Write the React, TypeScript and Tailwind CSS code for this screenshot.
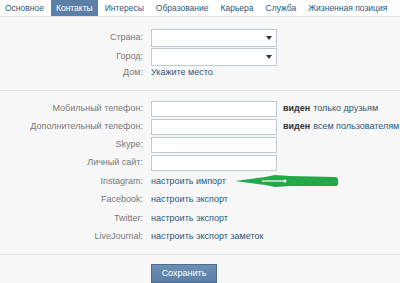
import React from "react";

const tabs = ["Основное", "Контакты", "Интересы", "Образование", "Карьера", "Служба", "Жизненная позиция"];

function Row({ label, children, h = "h-[18px]" }: { label: string; children: React.ReactNode; h?: string }) {
  return (
    <div className={`flex items-center whitespace-nowrap ${h}`}>
      <div className="w-[143px] shrink-0 text-right text-[#777]">{label}</div>
      <div className="ml-[8px] flex items-center">{children}</div>
    </div>
  );
}

function Select() {
  return (
    <div className="w-[126px] h-[18px] bg-white border border-[#c0cad5] flex items-center justify-end pr-[4px]">
      <div className="w-0 h-0 border-l-[3px] border-r-[3px] border-t-[4px] border-l-transparent border-r-transparent border-t-[#333]" />
    </div>
  );
}

function Input() {
  return <div className="w-[126px] h-[16px] bg-white border border-[#c0cad5]" />;
}

export default function App() {
  return (
    <div className="w-[400px] h-[283px] bg-[#f7f7f7] text-[9px] overflow-hidden" style={{ fontFamily: "'Liberation Sans', Arial, sans-serif" }}>
      <div className="h-[17px] bg-white flex items-stretch gap-[2px] border-b border-[#e4e4e4] text-[#2b587a] text-[8.5px] whitespace-nowrap">
        {tabs.map((t) => (
          <div
            key={t}
            className={`px-[5px] flex items-center ${t === "Контакты" ? "bg-[#5b7fa6] text-white" : ""}`}
          >
            {t}
          </div>
        ))}
      </div>

      <div className="pt-[12px] flex flex-col gap-[1px]">
        <Row label="Страна:"><Select /></Row>
        <Row label="Город:"><Select /></Row>
        <Row label="Дом:" h="h-[12px]"><span className="text-[#2b587a]">Укажите место</span></Row>
      </div>

      <div className="mt-[11px] border-t border-[#e4e4e4]" />

      <div className="pt-[10px] flex flex-col gap-[2px]">
        <Row label="Мобильный телефон:" h="h-[16px]">
          <Input />
          <span className="ml-[6px] font-bold text-[#333]">виден</span>
          <span className="ml-[3px] text-[#2b587a]">только друзьям</span>
        </Row>
        <Row label="Дополнительный телефон:" h="h-[16px]">
          <Input />
          <span className="ml-[6px] font-bold text-[#333]">виден</span>
          <span className="ml-[3px] text-[#2b587a]">всем пользователям</span>
        </Row>
        <Row label="Skype:" h="h-[16px]"><Input /></Row>
        <Row label="Личный сайт:" h="h-[16px]"><Input /></Row>
      </div>

      <div className="pt-[1px] flex flex-col">
        <Row label="Instagram:" h="h-[18.5px]">
          <span className="text-[#2b587a]">настроить импорт</span>
          <svg className="ml-[9px]" width="104" height="14" viewBox="0 0 104 14">
            <path d="M0 7 L30 3 L40 1 L55 2 L100 3 Q103 3 103 6 L103 10 Q103 12 100 12 L55 12 L40 13 L30 11 Z" fill="#23a84a" />
            <line x1="27" y1="7" x2="50" y2="7" stroke="#fff" strokeWidth="1.2" />
            <circle cx="50" cy="7" r="1.5" fill="#fff" />
          </svg>
        </Row>
        <Row label="Facebook:" h="h-[18.5px]"><span className="text-[#2b587a]">настроить экспорт</span></Row>
        <Row label="Twitter:" h="h-[18.5px]"><span className="text-[#2b587a]">настроить экспорт</span></Row>
        <Row label="LiveJournal:" h="h-[18.5px]"><span className="text-[#2b587a]">настроить экспорт заметок</span></Row>
      </div>

      <div className="mt-[8px] border-t border-[#e4e4e4]" />

      <div className="pl-[151px] pt-[9px]">
        <button className="w-[66px] h-[19px] bg-gradient-to-b from-[#6d8fb3] to-[#5b7fa6] border border-[#4a6d95] text-white text-[9px]">
          Сохранить
        </button>
      </div>
    </div>
  );
}
